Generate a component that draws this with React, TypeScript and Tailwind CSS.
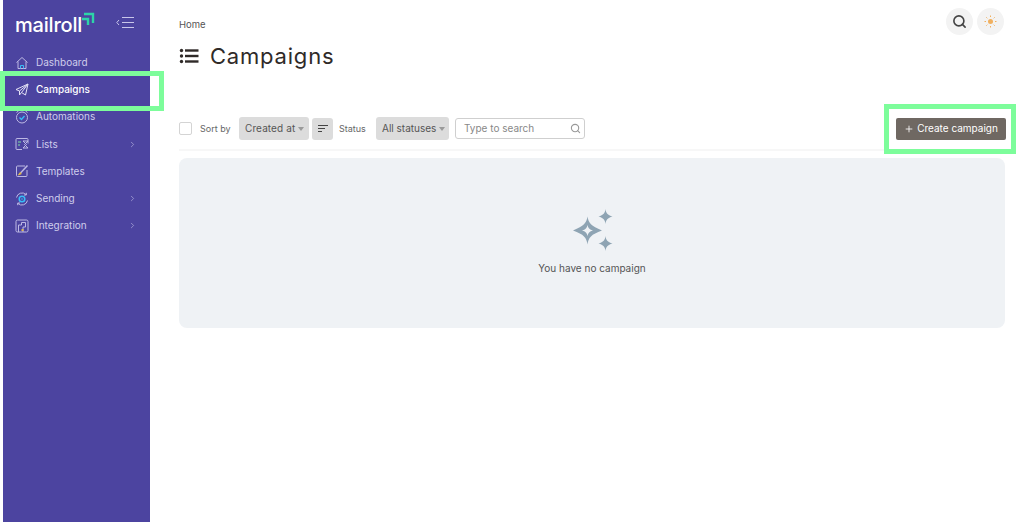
import React from 'react';
import { ChevronRight, Search, Plus } from 'lucide-react';

const font = "font-['Inter',sans-serif]";

function ListsIcon() {
  return (
    <svg width="14" height="14" viewBox="0 0 14 14" fill="none" stroke="#bdb9e4" strokeWidth="1">
      <path d="M13 6.500V2.500a1 1 0 0 0-1-1H2a1 1 0 0 0-1 1v9a1 1 0 0 0 1 1h5" />
      <path d="M3 5h3M3 8h2" stroke="#7fe3a0" />
      <path d="M8 4l3.500 3.500L8 11h5L9.500 7.500 13 4z" />
    </svg>
  );
}

function TemplatesIcon() {
  return (
    <svg width="14" height="14" viewBox="0 0 14 14" fill="none" stroke="#bdb9e4" strokeWidth="1">
      <path d="M10 2H2.500A1 1 0 0 0 1.500 3v8.500a1 1 0 0 0 1 1H11a1 1 0 0 0 1-1V6" />
      <path d="M5.500 9L12.500 1.500" strokeWidth="1.500" />
      <path d="M3.500 11l1.500-2.500 1.300 1.200z" fill="#e0b84c" stroke="#e0b84c" />
    </svg>
  );
}

function SendingIcon() {
  return (
    <svg width="14" height="14" viewBox="0 0 14 14" fill="none" stroke="#bdb9e4" strokeWidth="1">
      <path d="M1.500 5.500a5.700 5.700 0 0 1 9.500-3M12.500 8.500a5.700 5.700 0 0 1-9.500 3" />
      <path d="M11.300 0.800v2.200H9M2.700 13.200V11H5" />
      <circle cx="7" cy="7" r="2.800" stroke="#38bdf8" strokeWidth="1.500" />
      <circle cx="7" cy="7" r="0.800" fill="#38bdf8" stroke="none" />
    </svg>
  );
}

function IntegrationIcon() {
  return (
    <svg width="14" height="14" viewBox="0 0 14 14" fill="none" stroke="#bdb9e4" strokeWidth="1">
      <rect x="1" y="1" width="12" height="12" rx="1.500" />
      <path d="M3.500 13V6h3V3.500h4V8H8v5" />
      <rect x="6.500" y="10" width="2" height="2" fill="#e0b84c" stroke="none" />
    </svg>
  );
}

function DashboardIcon() {
  return (
    <svg width="14" height="14" viewBox="0 0 14 14" fill="none" stroke="#bdb9e4" strokeWidth="1">
      <path d="M1.500 6.500L7 1.500l5.500 5M3 5.500v7h8v-7" />
      <path d="M5.500 12.500V9.500h3v3" stroke="#38bdf8" />
    </svg>
  );
}

function CampaignIcon() {
  return (
    <svg width="14" height="14" viewBox="0 0 14 14" fill="none" stroke="#e4e2f5" strokeWidth="1">
      <path d="M13 1L1 6.500l3.500 1.500L13 1zM13 1l-2.500 11-4-2.500M4.500 8v4l2-2.500M13 1L6.500 9.500" />
    </svg>
  );
}

function AutomationIcon() {
  return (
    <svg width="14" height="14" viewBox="0 0 14 14" fill="none" stroke="#bdb9e4" strokeWidth="1">
      <circle cx="7" cy="7.500" r="5.500" />
      <path d="M4.500 7.500l2 2 3-3.500" stroke="#38bdf8" strokeWidth="1.300" />
      <path d="M1.500 2.500l2-1.500M12.500 2.500l-2-1.500" />
    </svg>
  );
}

function SunIcon() {
  return (
    <svg width="13" height="13" viewBox="0 0 13 13" fill="#f0b060" stroke="#f0b060" strokeWidth="1">
      <circle cx="6.500" cy="6.500" r="2.500" stroke="none" />
      <path d="M6.500 0.500v1.500M6.500 11v1.500M0.500 6.500H2M11 6.500h1.500M2.300 2.300l1 1M9.700 9.700l1 1M2.300 10.700l1-1M9.700 3.300l1-1" />
    </svg>
  );
}

const navItems = [
  { label: 'Dashboard', icon: <DashboardIcon /> },
  { label: 'Campaigns', icon: <CampaignIcon />, active: true },
  { label: 'Automations', icon: <AutomationIcon /> },
  { label: 'Lists', icon: <ListsIcon />, more: true },
  { label: 'Templates', icon: <TemplatesIcon /> },
  { label: 'Sending', icon: <SendingIcon />, more: true },
  { label: 'Integration', icon: <IntegrationIcon />, more: true },
];

function Caret() {
  return <span className="h-0 w-0 border-x-[3px] border-t-[4px] border-x-transparent border-t-[#9a9a9a]" />;
}

function Sparkles() {
  return (
    <svg width="42" height="42" viewBox="0 0 42 42" className="ml-[4px]">
      <path
        fillRule="evenodd"
        fill="#8ea4b3"
        d="M14.500 7.500C15.500 14 18 17 29 21.500 18 25.500 15.500 28.500 14.500 35.500 13.500 28.500 11 25.500 0 21.500 11 17 13.500 14 14.500 7.500ZM14.500 16C14 19 12.500 20.500 9 21.500 12.500 22.500 14 24 14.500 27 15 24 16.500 22.500 20 21.500 16.500 20.500 15 19 14.500 16Z"
      />
      <path fill="#8ea4b3" d="M32.500 0C33 4 34.500 6 39.500 7.500 34.500 9 33 11 32.500 15 32 11 30.500 9 25.500 7.500 30.500 6 32 4 32.500 0Z" />
      <path fill="#8ea4b3" d="M32.500 27C33 31 34.500 33 39.500 34.500 34.500 36 33 38 32.500 42 32 38 30.500 36 25.500 34.500 30.500 33 32 31 32.500 27Z" />
    </svg>
  );
}

export default function App() {
  return (
    <div className={`relative flex h-[522px] w-[1024px] overflow-hidden bg-white pl-[3px] ${font}`}>
      <aside className="w-[147px] shrink-0 bg-[#4c44a0]">
        <div className="flex h-[49px] items-center pl-[12px] pr-[16px]">
          <span className="text-[20px] font-medium leading-none tracking-[-0.2px] text-white">mailroll</span>
          <svg width="14" height="14" viewBox="0 0 14 14" fill="none" stroke="#2dd4a8" strokeWidth="2.400" className="mb-[12px] ml-[-1px]">
            <path d="M3 2h9v9M1 7h6v6" />
          </svg>
          <svg width="18" height="11" viewBox="0 0 18 11" fill="none" stroke="#c9c6ea" strokeWidth="1" className="mb-[5px] ml-auto">
            <path d="M3 3L0.800 5.500 3 8M6 0.500h12M6 5.500h12M6 10.500h12" />
          </svg>
        </div>
        <nav className="flex flex-col">
          {navItems.map((item) => (
            <div key={item.label} className="flex h-[27.200px] items-center pl-[12px] pr-[13px]">
              <span className="flex w-[21px] shrink-0">{item.icon}</span>
              <span className={`text-[10px] ${item.active ? 'font-medium text-white' : 'text-[#cfcdec]'}`}>{item.label}</span>
              {item.more && <ChevronRight size={9} strokeWidth={2} className="ml-auto text-[#a9a5d8]" />}
            </div>
          ))}
        </nav>
      </aside>

      <main className="flex min-w-0 flex-1 flex-col pl-[29px] pr-[19px]">
        <div className="flex h-[37px] items-end justify-between">
          <span className="pb-[5px] text-[9.500px] text-[#555]">Home</span>
          <div className="mr-[1px] flex gap-[4px] self-start pt-[8px]">
            <span className="flex h-[27px] w-[27px] items-center justify-center rounded-full bg-[#f3f3f3]">
              <Search size={15} strokeWidth={2.600} className="text-[#444]" />
            </span>
            <span className="flex h-[27px] w-[27px] items-center justify-center rounded-full bg-[#f3f3f3]">
              <SunIcon />
            </span>
          </div>
        </div>

        <div className="mt-[3px] flex h-[32px] items-center gap-[11px]">
          <svg width="20" height="16" viewBox="0 0 20 16" fill="#2f2a28">
            <circle cx="2.500" cy="2.500" r="1.700" />
            <circle cx="2.500" cy="8" r="1.700" />
            <circle cx="2.500" cy="13.500" r="1.700" />
            <rect x="6" y="1.300" width="13.500" height="2.400" />
            <rect x="6" y="6.800" width="13.500" height="2.400" />
            <rect x="6" y="12.300" width="13.500" height="2.400" />
          </svg>
          <h1 className="text-[22px] font-normal tracking-[0.8px] text-[#2f2a28]">Campaigns</h1>
        </div>

        <div className="mt-[45px] flex h-[23px] items-center">
          <span className="h-[13px] w-[13px] rounded-[2px] border border-[#d4d4d4] bg-white" />
          <span className="ml-[8px] w-[39px] text-[9px] text-[#666]">Sort by</span>
          <span className="flex h-[23px] w-[70px] items-center gap-[3px] rounded-[3px] bg-[#dcdcdc] pl-[6px] text-[10px] tracking-[0.1px] text-[#555]">
            Created at <Caret />
          </span>
          <span className="ml-[3px] flex h-[22px] w-[21px] flex-col items-center justify-center gap-[2px] rounded-[3px] bg-[#dcdcdc]">
            <span className="h-px w-[10px] bg-[#444]" />
            <span className="mr-[3px] h-px w-[7px] bg-[#444]" />
            <span className="mr-[6px] h-px w-[4px] bg-[#444]" />
          </span>
          <span className="ml-[6px] w-[37px] text-[9px] text-[#666]">Status</span>
          <span className="flex h-[23px] w-[73px] items-center gap-[3px] rounded-[3px] bg-[#dcdcdc] pl-[6px] text-[10px] text-[#555]">
            All statuses <Caret />
          </span>
          <div className="ml-[6px] flex h-[21px] w-[130px] items-center justify-between rounded-[3px] border border-[#cfcfcf] bg-white pl-[8px] pr-[3px]">
            <span className="text-[10px] text-[#888]">Type to search</span>
            <Search size={11} strokeWidth={2.400} className="text-[#999]" />
          </div>
          <button className="ml-auto mr-[-1px] flex h-[22px] w-[110px] items-center justify-center gap-[3px] rounded-[2px] bg-[#6f6862] text-[10px] text-white">
            <Plus size={10} strokeWidth={2} />
            Create campaign
          </button>
        </div>

        <div className="mt-[9px] h-[2px] bg-[#f7f7f7]" />

        <div className="mt-[7px] flex h-[170px] flex-col items-center rounded-[8px] bg-[#eff2f5] pt-[51px]">
          <Sparkles />
          <p className="mt-[10px] text-[10px] text-[#555]">You have no campaign</p>
        </div>
      </main>

      {/* green highlight boxes sit on top of the app */}
      <div className="absolute left-0 top-[71px] h-[40px] w-[164px] border-[5px] border-[#7dfd9b]" />
      <div className="absolute left-[884px] top-[104px] h-[50px] w-[132px] border-[5px] border-[#7dfd9b]" />
    </div>
  );
}
